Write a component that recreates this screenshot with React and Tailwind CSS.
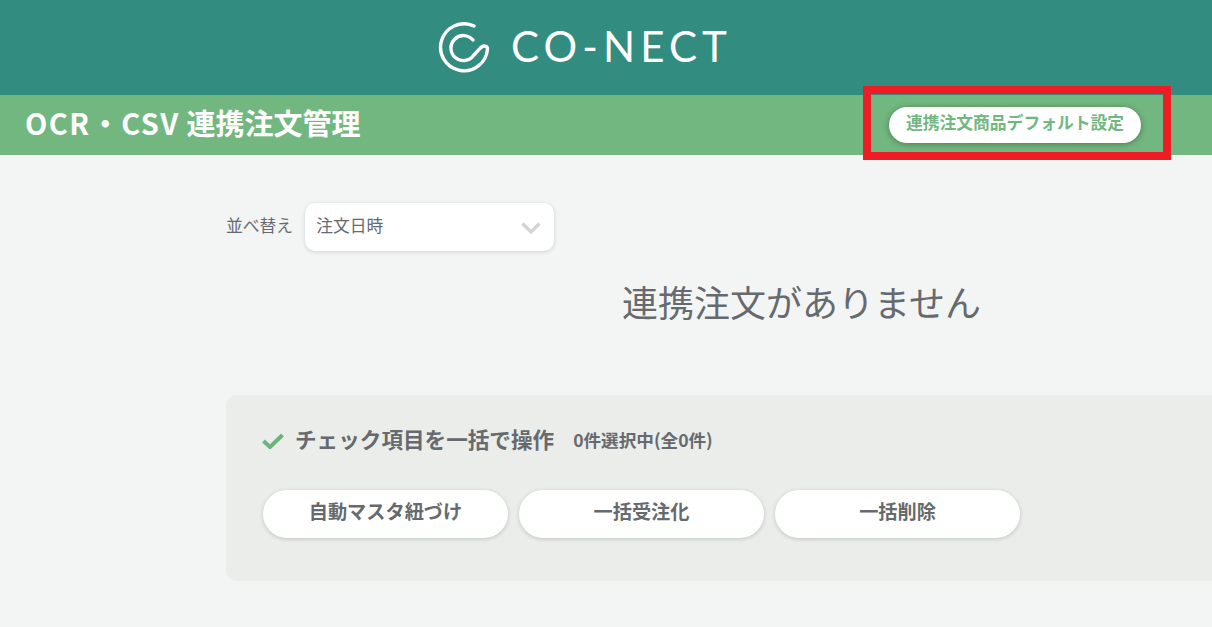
import React from "react";

function Logo() {
  return (
    <svg width="52" height="52" viewBox="0 0 52 52" fill="none" stroke="#fff" strokeWidth="3.4" strokeLinecap="round" className="shrink-0">
      <path d="M36 4 A 23.5 23.5 0 1 0 49.5 27 C 49.5 24 45.5 23 43 25.5" />
      <path d="M35 18 A 12.5 12.5 0 1 0 35.5 33.5 C 38 31 40 28 43 25.5" />
    </svg>
  );
}

function Pill({ children }) {
  return (
    <button className="w-[245px] h-[48px] rounded-full bg-white text-[#666a6e] text-[19.2px] font-bold shadow-[0_1px_4px_rgba(0,0,0,0.18)] flex items-center justify-center pb-[5px]">
      {children}
    </button>
  );
}

export default function App() {
  return (
    <div className="relative w-[1212px] h-[627px] overflow-hidden bg-[#f3f5f4] font-['Noto_Sans_CJK_JP','Noto_Sans',sans-serif]">
      <header className="h-[95px] bg-[#328c80] flex items-center justify-center gap-[21px] pr-[42px]">
        <Logo />
        <span className="font-['Lato',sans-serif] font-normal text-white text-[42px] tracking-[5.1px] leading-none pb-[3px]">CO-NECT</span>
      </header>
      <div className="h-[60px] bg-[#72b77f] flex items-center justify-between pl-[25px] pr-[71px]">
        <h1 className="text-white text-[29px] font-bold leading-none pb-[5px] whitespace-nowrap">
          <span className="tracking-[1.5px]">OCR・CSV</span> 連携注文管理
        </h1>
        <button className="w-[252px] h-[36px] rounded-full bg-white text-[#72b77f] text-[16.8px] font-bold shadow-[0_1px_6px_rgba(0,0,0,0.35)] flex items-center justify-center pb-[3px] mb-[1px]">
          連携注文商品デフォルト設定
        </button>
      </div>
      <div className="absolute left-[863px] top-[86px] w-[308px] h-[74px] border-[8px] border-[#ee1c25]" />
      <main className="pl-[226px]">
        <div className="flex items-center gap-[12px] pt-[48px]">
          <span className="text-[16.8px] text-[#666a70] leading-none pb-[3px]">並べ替え</span>
          <div className="w-[249px] h-[48px] rounded-[10px] bg-white shadow-[0_1px_4px_rgba(0,0,0,0.15)] flex items-center justify-between pl-[11px] pr-[13px]">
            <span className="text-[16.8px] text-[#666a70] leading-none pb-[4px]">注文日時</span>
            <svg width="20" height="12" viewBox="0 0 20 12" fill="none" stroke="#d3d3d3" strokeWidth="3.2" className="mt-[2px]">
              <path d="M1.5 1.5 L10 10 L18.5 1.5" />
            </svg>
          </div>
        </div>
        <p className="text-[36px] text-[#666a6e] leading-none ml-[396px] mt-[32px] whitespace-nowrap">連携注文がありません</p>
        <section className="mt-[76px] h-[186px] rounded-l-[10px] bg-[#ebedea] pl-[36px] pt-[32px]">
          <div className="flex items-center h-[28px]">
            <svg width="22" height="16" viewBox="0 0 22 16" fill="none" stroke="#6cb37c" strokeWidth="4" className="shrink-0">
              <path d="M1.5 8 L8 14 L20.5 2" />
            </svg>
            <span className="ml-[11px] text-[#666a6e] text-[21.6px] font-bold leading-none pb-[4px]">チェック項目を一括で操作</span>
            <span className="ml-[19px] text-[#666a6e] text-[17.6px] font-bold leading-none pb-[2px]">0件選択中(全0件)</span>
          </div>
          <div className="flex gap-[11px] mt-[35px] ml-[1px]">
            <Pill>自動マスタ紐づけ</Pill>
            <Pill>一括受注化</Pill>
            <Pill>一括削除</Pill>
          </div>
        </section>
      </main>
    </div>
  );
}
